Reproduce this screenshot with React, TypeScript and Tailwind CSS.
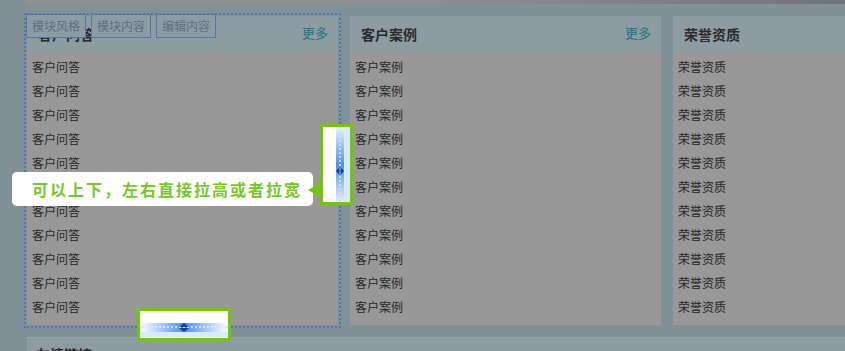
import React from "react";

const font = "font-['Noto_Sans_CJK_SC','Noto_Sans',sans-serif]";

function Panel({ title, item, more, selected }: { title: string; item: string; more?: boolean; selected?: boolean }) {
  const rows = Array.from({ length: 11 });
  return (
    <div
      className={
        "w-[311px] shrink-0 h-[309px] bg-[#989898] " +
        (selected ? "outline-2 outline-dotted outline-[#4a78b6] outline-offset-1" : "")
      }
    >
      <div className="h-[35px] bg-[#8c9ca2] flex items-center justify-between pl-[11px] pr-[10px]">
        <span className="text-[14px] font-bold text-[#2b2b2b] leading-none">{title}</span>
        {more && <span className="text-[13px] text-[#27737f] leading-none -mt-[2px]">更多</span>}
      </div>
      <div className="pt-[4px] pl-[5px]">
        {rows.map((_, i) => (
          <div key={i} className="h-[24px] flex items-center text-[12px] text-[#262626] leading-none">
            {item}
          </div>
        ))}
      </div>
    </div>
  );
}

export default function App() {
  return (
    <div className={"relative w-[845px] h-[351px] overflow-hidden bg-[#809198] " + font}>
      {/* banner strip */}
      <div className="ml-[26px] h-[4px] bg-linear-to-r from-[#8f9193] via-[#8d8f92] to-[#6f737b]" />

      {/* panels row */}
      <div className="flex gap-[12px] pl-[27px] pt-[12px]">
        <Panel title="客户问答" item="客户问答" more selected />
        <Panel title="客户案例" item="客户案例" more />
        <Panel title="荣誉资质" item="荣誉资质" />
      </div>

      {/* bottom panel */}
      <div className="ml-[27px] mt-[12px] h-[40px] bg-[#8c9ca2] border-t border-[#95a4a9] pl-[9px] pt-[6px]">
        <span className="block text-[14px] font-bold text-[#2b2b2b] leading-[20px]">友情链接</span>
      </div>

      {/* edit buttons over panel 1 header */}
      <div className="absolute left-[26px] top-[14px] flex gap-[5px]">
        {["模块风格", "模块内容", "编辑内容"].map((t) => (
          <div
            key={t}
            className="w-[60px] h-[24px] border border-[#5079a6] bg-[#8c9ca2] text-[12px] text-[#5e717e] flex items-center justify-center leading-none"
          >
            {t}
          </div>
        ))}
      </div>

      {/* vertical resize handle */}
      <div className="absolute left-[320px] top-[124px] w-[33px] h-[81px] border-[3px] border-[#74c40e] flex">
        <div className="w-[13px] bg-white" />
        <div className="w-[8px] relative bg-linear-to-b from-[#e8f2fe] via-[#4f8fee] to-[#e3effd]">
          <div className="absolute left-[3px] top-0 bottom-0 border-l-2 border-dotted border-[#cfe2fb]" />
          <svg className="absolute left-0 top-[39px]" width="8" height="10" viewBox="0 0 8 10">
            <path d="M0 5 L3.5 1 L3.5 9 Z M8 5 L4.5 1 L4.5 9 Z" fill="#173f8f" />
          </svg>
        </div>
        <div className="flex-1 bg-[#d6ecfb]" />
      </div>

      {/* horizontal resize handle */}
      <div className="absolute left-[137px] top-[308px] w-[94px] h-[33px] border-[3px] border-[#74c40e] flex flex-col">
        <div className="h-[12px] bg-white" />
        <div className="h-[9px] relative bg-linear-to-r from-white via-[#4a8cf0] to-white">
          <div className="absolute left-0 right-0 top-[3px] border-t-2 border-dotted border-[#d6e6fb]" />
          <svg className="absolute left-[38px] top-0" width="12" height="9" viewBox="0 0 12 9">
            <path d="M6 0 L11 4 L1 4 Z M6 9 L11 5 L1 5 Z" fill="#173f8f" />
          </svg>
        </div>
        <div className="flex-1 bg-[#d6ecfb] border-b border-[#eef7fd]" />
      </div>

      {/* tooltip */}
      <div className="absolute left-[12px] top-[172px] w-[301px] h-[34px] bg-white rounded-[5px] flex items-center pl-[20px]">
        <span className="text-[16px] font-bold text-[#76c828] tracking-[2px] leading-none">
          可以上下，左右直接拉高或者拉宽
        </span>
      </div>
      <div className="absolute left-[308px] top-[183px] w-0 h-0 border-y-[7px] border-y-transparent border-r-[12px] border-r-[#74c40e]" />
    </div>
  );
}
